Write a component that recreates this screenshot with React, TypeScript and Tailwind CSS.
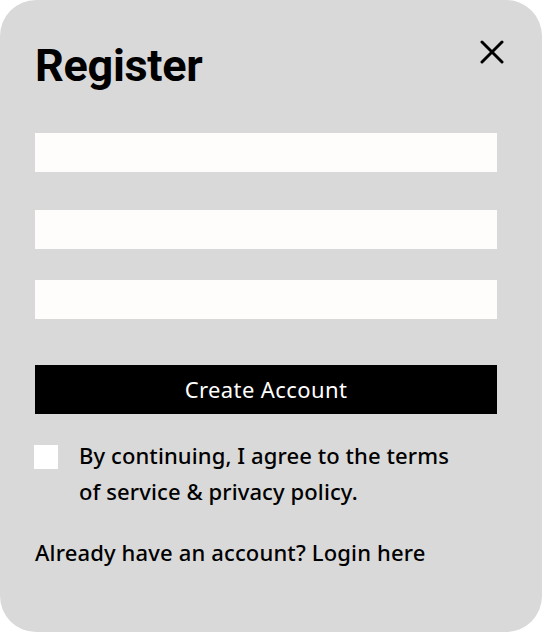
export default function App() {
  return (
    <div className="w-[542px] h-[632px] bg-white">
      <div className="w-full h-full bg-[#d9d9d9] rounded-[36px] flex flex-col pl-[35px] pr-[45px] pt-[40px] font-['Noto_Sans',sans-serif] text-black">
        <div className="flex items-start justify-between">
          <h1 className="font-['Roboto',sans-serif] font-bold text-[45px] leading-[52px] tracking-[-0.3px]">Register</h1>
          <button className="mt-[0px] mr-[-7px] w-[24px] h-[24px]">
            <svg width="24" height="24" viewBox="0 0 24 24" fill="none" stroke="black" strokeWidth="3" strokeLinecap="round">
              <line x1="2" y1="2" x2="22" y2="22" />
              <line x1="22" y1="2" x2="2" y2="22" />
            </svg>
          </button>
        </div>

        <div className="flex flex-col mt-[41px]">
          <input className="h-[39px] w-full bg-[#fefdfb] outline-none" />
          <input className="h-[39px] w-full bg-[#fefdfb] outline-none mt-[38px]" />
          <input className="h-[39px] w-full bg-[#fefdfb] outline-none mt-[31px]" />
        </div>

        <button className="mt-[46px] h-[49px] w-full bg-black text-white text-[22px] tracking-[0.4px] flex items-center justify-center">
          Create Account
        </button>

        <div className="flex items-start mt-[31px]">
          <div className="w-[24px] h-[24px] bg-white ml-[-1px] shrink-0" />
          <p className="ml-[21px] text-[22px] font-medium leading-[36px] tracking-[0.1px] mt-[-8px]">
            By continuing, I agree to the terms<br />of service &amp; privacy policy.
          </p>
        </div>

        <p className="mt-[29px] text-[22px] font-medium leading-[28px] tracking-[0.15px]">Already have an account? Login here</p>
      </div>
    </div>
  )
}
